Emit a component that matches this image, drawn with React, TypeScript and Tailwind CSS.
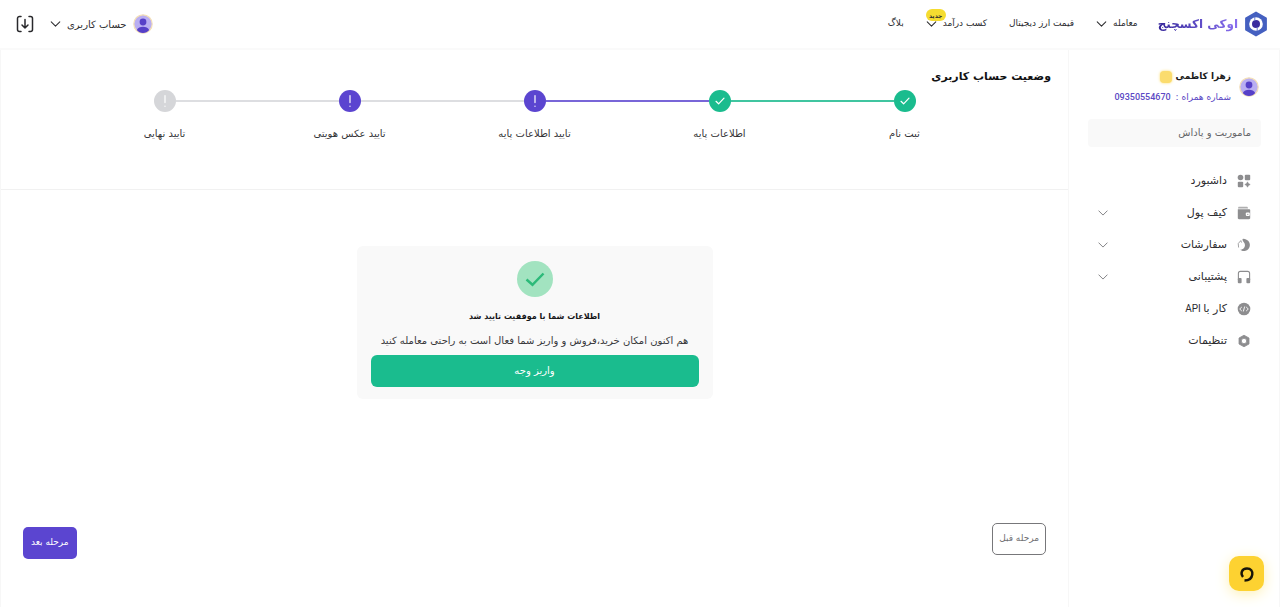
import React from "react";

type StepState = "done" | "active" | "idle";

const circleTone: Record<StepState, string> = {
  done: "bg-[#1abc8e]",
  active: "bg-[#5b45d0]",
  idle: "bg-[#d5d6d9]",
};

const steps: { label: string; state: StepState; before: string; after: string }[] = [
  { label: "ثبت نام", state: "done", before: "bg-transparent", after: "bg-[#40c5a0]" },
  { label: "اطلاعات پایه", state: "done", before: "bg-[#40c5a0]", after: "bg-[#7866d8]" },
  { label: "تایید اطلاعات پایه", state: "active", before: "bg-[#7866d8]", after: "bg-[#dddee1]" },
  { label: "تایید عکس هویتی", state: "active", before: "bg-[#dddee1]", after: "bg-[#dddee1]" },
  { label: "تایید نهایی", state: "idle", before: "bg-[#dddee1]", after: "bg-transparent" },
];

function Chevron({ className }: { className: string }) {
  return (
    <svg viewBox="0 0 12 7" className={className} fill="none" stroke="currentColor" strokeWidth="1.2" strokeLinecap="round" strokeLinejoin="round" aria-hidden="true">
      <path d="M1 1l5 5 5-5" />
    </svg>
  );
}

function Avatar() {
  return (
    <svg viewBox="0 0 20 20" className="size-5 shrink-0" aria-hidden="true">
      <circle cx="10" cy="10" r="9.2" fill="#b9aef2" stroke="#f3dfb8" strokeWidth="1.2" />
      <circle cx="10" cy="8" r="3.4" fill="#5640c8" />
      <path d="M3.800 16c1.200-2.400 3.400-3.200 6.200-3.200s5 .8 6.200 3.200c-1.500 1.900-3.600 3-6.200 3s-4.700-1.100-6.200-3z" fill="#5640c8" />
    </svg>
  );
}

function Logo() {
  return (
    <svg viewBox="0 0 24 26" className="h-[26px] w-6" aria-hidden="true">
      <path d="M12 1.500L22 7.200v11.600L12 24.500 2 18.800V7.200z" fill="#4560c0" stroke="#4560c0" strokeWidth="1.800" strokeLinejoin="round" />
      <circle cx="12" cy="13" r="6.800" fill="#fff" />
      <circle cx="12" cy="13" r="4" fill="#3a2b9e" />
      <path d="M10.800 6v4M13.200 16v4" stroke="#6d7cd0" strokeWidth="1" />
    </svg>
  );
}

const icons: Record<string, React.ReactNode> = {
  dashboard: (
    <>
      <circle cx="3.500" cy="3.500" r="2.800" />
      <rect x="7.800" y=".8" width="5.400" height="5.400" rx="1" />
      <rect x=".8" y="7.800" width="5.400" height="5.400" rx="1" />
      <path d="M10.500 7.800l1 1.700 1.700 1-1.700 1-1 1.700-1-1.700-1.700-1 1.700-1z" stroke="currentColor" strokeWidth=".5" />
    </>
  ),
  wallet: (
    <>
      <path d="M2 .8h7.500c1 0 1.500.6 1.500 1.700H1C1 1.300 1.500.8 2 .8z" opacity=".7" />
      <path d="M.8 3.200h11.200c.7 0 1.200.4 1.200 1V12c0 .7-.5 1.200-1.200 1.200H2c-.7 0-1.200-.5-1.200-1.200z" />
      <rect x="8.800" y="6.600" width="4" height="3.400" rx="1" fill="#fff" />
      <circle cx="10.800" cy="8.300" r=".6" />
    </>
  ),
  orders: (
    <>
      <path d="M5.500 1A6.100 6.100 0 1 1 2.800 11.600C6.500 12 9.600 7.800 7 4.500 6.200 3.400 5.400 2.300 5.500 1z" />
      <path d="M1.600 9.500A5.600 5.600 0 0 1 3.800 2.600l.8 2" fill="none" stroke="currentColor" strokeWidth=".8" />
    </>
  ),
  support: (
    <>
      <path d="M1.400 10V3.400c0-1.200.8-2 2-2h7.200c1.200 0 2 .8 2 2V10" fill="none" stroke="currentColor" strokeWidth="1.100" />
      <rect x=".8" y="8" width="3.800" height="5.200" rx="1" />
      <rect x="9.400" y="8" width="3.800" height="5.200" rx="1" />
    </>
  ),
  api: (
    <>
      <circle cx="7" cy="7" r="6.300" />
      <path d="M4.800 5L2.700 7l2.100 2M9.200 5l2.100 2-2.100 2M7.700 4.500l-1.400 5" fill="none" stroke="#fff" strokeWidth=".9" />
    </>
  ),
  settings: (
    <path fillRule="evenodd" stroke="currentColor" strokeWidth=".8" strokeLinejoin="round" d="M7 1.200L12 4v6L7 12.800 2 10V4zM7 4.300a2.700 2.700 0 1 0 0 5.400 2.700 2.700 0 0 0 0-5.400z" />
  ),
};

const menu: { label: string; latin?: string; icon: string; expandable: boolean }[] = [
  { label: "داشبورد", icon: "dashboard", expandable: false },
  { label: "کیف پول", icon: "wallet", expandable: true },
  { label: "سفارشات", icon: "orders", expandable: true },
  { label: "پشتیبانی", icon: "support", expandable: true },
  { label: "کار با", latin: "API", icon: "api", expandable: false },
  { label: "تنظیمات", icon: "settings", expandable: false },
];

function Header() {
  return (
    <header className="flex h-12 items-center justify-between bg-white pr-3 pl-4">
      <div className="flex items-center">
        <a href="#" className="flex items-center gap-1.5">
          <Logo />
          <span className="bg-linear-to-l from-[#8a70f0] to-[#35249a] bg-clip-text text-[12px] font-bold text-transparent">اوکی اکسچنج</span>
        </a>
        <nav className="mr-5 flex items-center gap-[22px] text-[9px] text-[#2c2c2f]">
          <button type="button" className="flex items-center gap-1.5">
            معامله
            <Chevron className="h-1.5 w-[11px]" />
          </button>
          <a href="#">قیمت ارز دیجیتال</a>
          <button type="button" className="relative flex items-center gap-1.5">
            کسب درآمد
            <Chevron className="h-1.5 w-[11px]" />
            <span className="absolute -top-2 left-0 flex h-3 w-5 items-center justify-center rounded-md bg-[#f5dc30] text-[6px] font-bold">جدید</span>
          </button>
          <a href="#">بلاگ</a>
        </nav>
      </div>
      <div className="flex items-center gap-4">
        <button type="button" className="flex items-center gap-1.5 text-[10px] text-[#2e2e31]">
          <Avatar />
          حساب کاربری
          <Chevron className="h-1.5 w-[11px]" />
        </button>
        <button type="button" aria-label="دانلود">
          <svg viewBox="0 0 18 18" className="size-[18px]" fill="none" stroke="#29292c" strokeWidth="1.500" strokeLinecap="round" strokeLinejoin="round">
            <path d="M5 1.500H3.500A2 2 0 0 0 1.500 3.500v11A2 2 0 0 0 3.500 16.500H5M13 1.500h1.500A2 2 0 0 1 16.500 3.500v11a2 2 0 0 1-2 2H13M9 4.500v8.500M6 10l3 3 3-3" />
          </svg>
        </button>
      </div>
    </header>
  );
}

function Sidebar() {
  return (
    <aside className="w-[212px] shrink-0 border-x border-[#f7f7f7] bg-white pt-[17px] pr-[18px] pl-[19px]">
      <div className="flex items-center gap-2 pr-0.5">
        <Avatar />
        <div>
          <div className="flex h-5 items-center gap-1">
            <span className="text-[9px] font-bold text-[#1d1d20]">زهرا کاظمی</span>
            <span className="size-3 rounded-sm bg-[#fbdc6e] shadow-[0_0_3px_#fbdc6e]" />
          </div>
          <p className="h-5 text-[9px] leading-5 text-[#5b48c4]">
            شماره همراه : <span className="mr-0.5 font-['Roboto'] text-[9px] font-medium">09350554670</span>
          </p>
        </div>
      </div>
      <a href="#" className="mt-3 flex h-7 items-center rounded bg-[#f9f9f9] px-2.5 pb-0.5 text-[10px] text-[#666669]">
        ماموریت و پاداش
      </a>
      <ul className="mt-[18px]">
        {menu.map((item) => (
          <li key={item.label}>
            <button type="button" className="flex h-8 w-full items-center pr-2.5 pl-2.5 text-[11px] text-[#2c2c2f]">
              <svg viewBox="0 0 14 14" className="ml-2.5 size-3.5 text-[#8d8d8f]" fill="currentColor" aria-hidden="true">
                {icons[item.icon]}
              </svg>
              <span>
                {item.label}
                {item.latin && <span className="font-['Roboto'] text-[10px]"> {item.latin}</span>}
              </span>
              {item.expandable && <Chevron className="mr-auto h-1.5 w-2.5 text-[#858588]" />}
            </button>
          </li>
        ))}
      </ul>
    </aside>
  );
}

function Stepper() {
  return (
    <ol className="grid grid-cols-5 px-[71px]">
      {steps.map((step) => (
        <li key={step.label}>
          <div className="flex items-center">
            <span className={`h-0.5 flex-1 ${step.before}`} />
            <span className={`flex size-[22px] items-center justify-center rounded-full ${circleTone[step.state]}`}>
              <svg viewBox="0 0 12 12" className="size-3" fill="none" stroke="#fff" strokeWidth="1.200" strokeLinecap="round" strokeLinejoin="round" aria-hidden="true">
                {step.state === "done" ? <path d="M2 6.300l2.600 2.500L10 3.200" /> : <path d="M6 .600v7M6 11v.300" />}
              </svg>
            </span>
            <span className={`h-0.5 flex-1 ${step.after}`} />
          </div>
          <p className="mt-3 text-center text-[10px] leading-5 text-[#343437]">{step.label}</p>
        </li>
      ))}
    </ol>
  );
}

export default function App() {
  return (
    <div dir="rtl" className="flex min-h-screen flex-col bg-white font-['DejaVu_Sans',sans-serif]">
      <Header />
      <div className="flex flex-1 border-t-2 border-[#fafafa]">
        <Sidebar />
        <main className="flex flex-1 flex-col border-l border-[#f7f7f7]">
          <section className="h-[140px] border-b border-[#f1f1f1] pt-[17px]">
            <h1 className="px-[17px] text-[11px] leading-5 font-bold text-[#111113]">وضعیت حساب کاربری</h1>
            <div className="mt-[3px]">
              <Stepper />
            </div>
          </section>
          <section className="mx-auto mt-[56px] w-[356px] rounded-md bg-[#f9f9f9] px-3.5 pt-[15px] pb-3 text-center">
            <svg viewBox="0 0 36 36" className="mx-auto size-9" aria-hidden="true">
              <circle cx="18" cy="18" r="18" fill="#a2e3c0" />
              <path d="M9.500 18.500l6 5.300L26.500 12.500" fill="none" stroke="#2cba79" strokeWidth="2.500" />
            </svg>
            <h2 className="mt-2.5 text-[8px] leading-5 font-bold text-[#151517]">اطلاعات شما با موفقیت تایید شد</h2>
            <p className="mt-1 text-[10px] leading-5 whitespace-nowrap text-[#38383b]">هم اکنون امکان خرید،فروش و واریز شما فعال است به راحتی معامله کنید</p>
            <button type="button" className="mt-1 h-8 w-full rounded-md bg-[#1abc8e] pb-0.5 text-[10px] text-white">واریز وجه</button>
          </section>
          <div className="mt-auto flex justify-between pr-[22px] pb-12 pl-[22px]">
            <button type="button" className="h-8 -translate-y-1 rounded-[5px] border border-[#77777a] px-1.5 text-[9px] text-[#707073]">مرحله قبل</button>
            <button type="button" className="h-8 rounded-[5px] bg-[#5b45d0] px-2 text-[9px] text-white">مرحله بعد</button>
          </div>
        </main>
      </div>
      <button type="button" aria-label="گفتگوی آنلاین" className="fixed right-4 bottom-4 flex size-[35px] items-center justify-center rounded-[10px] bg-[#fdd231] shadow-[0_3px_14px_#fdf0b5]">
        <svg viewBox="0 0 16 18" className="h-[18px] w-4" fill="none" stroke="#171509" strokeWidth="2.400" aria-hidden="true">
          <path d="M4 12C1.200 8.500 2.500 3.500 8 3.500c4 0 5.700 2.800 5.300 6-.5 3.800-2.800 6-7.800 6" />
        </svg>
      </button>
    </div>
  );
}
